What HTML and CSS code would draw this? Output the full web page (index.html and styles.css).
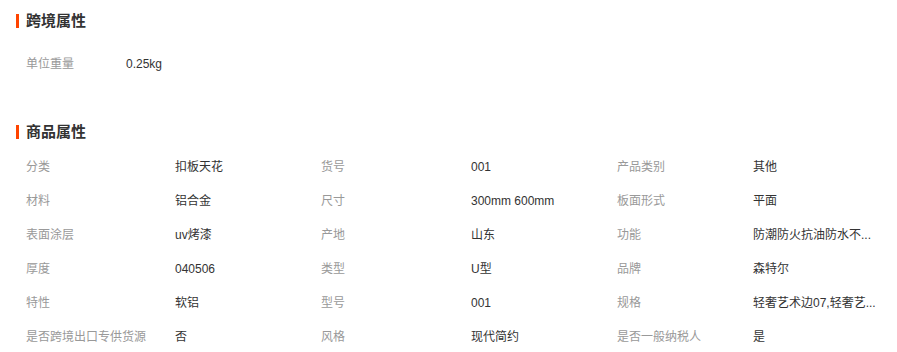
FILE: index.html
```html
<!DOCTYPE html>
<html lang="zh">
<head>
<meta charset="utf-8">
<link rel="stylesheet" href="styles.css">
</head>
<body>
<section class="sec sec-cross">
  <h2 class="sec-title">跨境属性</h2>
  <div class="grid-cross">
    <span class="lbl">单位重量</span><span class="val">0.25kg</span>
  </div>
</section>
<section class="sec sec-goods">
  <h2 class="sec-title">商品属性</h2>
  <div class="grid-goods">
    <span class="lbl">分类</span><span class="val">扣板天花</span>
    <span class="lbl">货号</span><span class="val">001</span>
    <span class="lbl">产品类别</span><span class="val">其他</span>

    <span class="lbl">材料</span><span class="val">铝合金</span>
    <span class="lbl">尺寸</span><span class="val">300mm 600mm</span>
    <span class="lbl">板面形式</span><span class="val">平面</span>

    <span class="lbl">表面涂层</span><span class="val">uv烤漆</span>
    <span class="lbl">产地</span><span class="val">山东</span>
    <span class="lbl">功能</span><span class="val">防潮防火抗油防水不...</span>

    <span class="lbl">厚度</span><span class="val">040506</span>
    <span class="lbl">类型</span><span class="val">U型</span>
    <span class="lbl">品牌</span><span class="val">森特尔</span>

    <span class="lbl">特性</span><span class="val">软铝</span>
    <span class="lbl">型号</span><span class="val">001</span>
    <span class="lbl">规格</span><span class="val">轻奢艺术边07,轻奢艺...</span>

    <span class="lbl">是否跨境出口专供货源</span><span class="val">否</span>
    <span class="lbl">风格</span><span class="val">现代简约</span>
    <span class="lbl">是否一般纳税人</span><span class="val">是</span>
  </div>
</section>
</body>
</html>
```
FILE: styles.css
```css
html, body {
  margin: 0;
  padding: 0;
  background: #fff;
}
body {
  font-family: "Liberation Sans", "Noto Sans CJK SC", sans-serif;
  font-size: 12px;
  color: #333;
  width: 897px;
  height: 352px;
  overflow: hidden;
}
.sec-title {
  margin: 0;
  display: flex;
  align-items: center;
  gap: 7px;
  height: 20px;
  padding-left: 16px;
  font-size: 15px;
  font-weight: bold;
  color: #333;
  line-height: 20px;
}
.sec-title::before {
  content: "";
  width: 3px;
  height: 14px;
  background: #ff4400;
}
.sec-cross {
  padding-top: 11px;
}
.grid-cross {
  margin-top: 16px;
  padding-left: 26px;
  display: grid;
  grid-template-columns: 100px auto;
  justify-content: start;
}
.sec-goods {
  margin-top: 41px;
}
.grid-goods {
  margin-top: 8px;
  padding-left: 26px;
  display: grid;
  grid-template-columns: 149px 146px 150px 146px 136px 144px;
}
.lbl, .val {
  height: 34px;
  line-height: 34px;
  white-space: nowrap;
}
.lbl {
  color: #999;
}
.val {
  color: #333;
}
```
